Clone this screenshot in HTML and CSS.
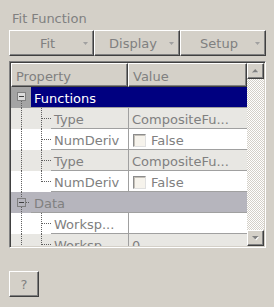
FILE: index.html
```html
<!DOCTYPE html>
<html lang="en">
<head>
  <meta charset="UTF-8">
  <title>Fit Function</title>
  <link rel="stylesheet" href="styles.css">
</head>
<body>
  <div class="dialog">
    <div class="caption">Fit Function</div>

    <div class="toolbar">
      <button class="menu-btn" type="button"><span class="label">Fit</span><svg class="caret" width="5" height="3"><path d="M0 0H5L2.5 3Z" fill="#a0a0a0"/></svg></button>
      <button class="menu-btn" type="button"><span class="label">Display</span><svg class="caret" width="5" height="3"><path d="M0 0H5L2.5 3Z" fill="#a0a0a0"/></svg></button>
      <button class="menu-btn" type="button"><span class="label">Setup</span><svg class="caret" width="5" height="3"><path d="M0 0H5L2.5 3Z" fill="#a0a0a0"/></svg></button>
    </div>

    <div class="browser">
      <div class="tree">
        <div class="head">
          <div class="head-cell prop-col">Property</div>
          <div class="head-cell">Value</div>
        </div>

        <!-- Functions group (selected) -->
        <div class="row group selected">
          <svg class="branch top" width="20" height="21">
            <rect x="6.5" y="5.5" width="8" height="8" fill="#dcdcdc" stroke="#808080"/>
            <path d="M8 9.5H13" stroke="#404040"/>
            <path d="M10.5 14V21" stroke="#606060" stroke-dasharray="1 1"/>
          </svg>
          <div class="group-name">Functions</div>
        </div>

        <div class="row alt">
          <svg class="branch child" width="40" height="21">
            <path d="M10.5 0V21M30.5 0V21M31 10.5H40" stroke="#606060" stroke-dasharray="1 1"/>
          </svg>
          <div class="prop">Type</div>
          <div class="val">CompositeFu...</div>
        </div>

        <div class="row">
          <svg class="branch child" width="40" height="21">
            <path d="M10.5 0V21M30.5 0V21M31 10.5H40" stroke="#606060" stroke-dasharray="1 1"/>
          </svg>
          <div class="prop">NumDeriv</div>
          <div class="val"><span class="check"></span>False</div>
        </div>

        <div class="row alt">
          <svg class="branch child" width="40" height="21">
            <path d="M10.5 0V21M30.5 0V21M31 10.5H40" stroke="#606060" stroke-dasharray="1 1"/>
          </svg>
          <div class="prop">Type</div>
          <div class="val">CompositeFu...</div>
        </div>

        <div class="row">
          <svg class="branch child" width="40" height="21">
            <path d="M10.5 0V21M30.5 0V11M31 10.5H40" stroke="#606060" stroke-dasharray="1 1"/>
          </svg>
          <div class="prop">NumDeriv</div>
          <div class="val"><span class="check"></span>False</div>
        </div>

        <!-- Data group -->
        <div class="row group data">
          <svg class="branch" width="20" height="21">
            <path d="M10.5 0V6M10.5 15V21M15 10.5H19" stroke="#606060" stroke-dasharray="1 1"/>
            <rect x="6.5" y="6.5" width="8" height="8" fill="none" stroke="#808080"/>
            <path d="M8 10.5H13" stroke="#404040"/>
          </svg>
          <div class="group-name">Data</div>
        </div>

        <div class="row">
          <svg class="branch child" width="40" height="21">
            <path d="M10.5 0V21M30.5 0V21M31 10.5H40" stroke="#606060" stroke-dasharray="1 1"/>
          </svg>
          <div class="prop">Worksp...</div>
          <div class="val"></div>
        </div>

        <div class="row alt">
          <svg class="branch child" width="40" height="21">
            <path d="M10.5 0V21M30.5 0V21M31 10.5H40" stroke="#606060" stroke-dasharray="1 1"/>
          </svg>
          <div class="prop">Worksp</div>
          <div class="val">0</div>
        </div>
      </div>

      <div class="scrollbar">
        <div class="sb-btn">
          <svg width="7" height="5"><path d="M1 4H7L4 1Z" fill="#fff"/><path d="M0 3.5H6.5L3.25 0Z" fill="#808080"/></svg>
        </div>
        <div class="sb-track"></div>
        <div class="sb-btn">
          <svg width="7" height="5"><path d="M1 1H7L4 4.5Z" fill="#fff"/><path d="M0 0H6.5L3.25 3.5Z" fill="#808080"/></svg>
        </div>
      </div>
    </div>

    <button class="help-btn" type="button">?</button>
  </div>
</body>
</html>
```

FILE: styles.css
```css
* {
  box-sizing: border-box;
}

body {
  margin: 0;
  background-color: #d4d0c8;
  font-family: "DejaVu Sans", sans-serif;
  font-size: 13px;
  color: #808080;
}

.dialog {
  padding: 11px 8px 0 9px;
}

.caption {
  height: 15px;
  line-height: 15px;
  padding-left: 3px;
}

/* dropdown buttons */
.toolbar {
  display: grid;
  grid-template-columns: 85px 86px 86px;
  margin-top: 4px;
}

.menu-btn,
.help-btn,
.head-cell,
.sb-btn {
  background-color: #d4d0c8;
  border: 1px solid;
  border-color: #ffffff #404040 #404040 #ffffff;
  box-shadow: inset -1px -1px #808080;
}

.menu-btn {
  display: flex;
  align-items: center;
  height: 26px;
  margin: 0;
  padding: 1px 5px 0 2px;
  font: inherit;
  color: #808080;
}

.menu-btn .label {
  flex: 1;
  text-align: center;
  line-height: 15px;
}

.caret {
  display: block;
}

/* property browser */
.browser {
  display: flex;
  height: 187px;
  margin-top: 5px;
  border: 1px solid;
  border-color: #808080 #ffffff #ffffff #808080;
  box-shadow: inset 1px 1px #404040, inset -1px -1px #d4d0c8;
  padding: 1px;
}

.tree {
  flex: 1;
  overflow: hidden;
  background-color: #ffffff;
}

.head {
  display: flex;
  height: 24px;
}

.head-cell {
  flex: 1;
  padding: 5px 0 0 4px;
  line-height: 15px;
}

.head-cell.prop-col {
  flex: 0 0 117px;
}

.row {
  display: flex;
  height: 21px;
  line-height: 15px;
}

.row.alt {
  background-color: #e8e7e3;
}

.branch {
  display: block;
  flex: none;
  shape-rendering: crispEdges;
}

.prop,
.val,
.group-name {
  height: 21px;
  padding: 4px 0 0 3px;
  border-bottom: 1px solid #a0a0a0;
  white-space: nowrap;
  overflow: hidden;
}

.prop {
  flex: 0 0 77px;
}

.val {
  flex: 1;
  display: flex;
  align-items: flex-start;
  border-left: 1px solid #a0a0a0;
}

.group-name {
  flex: 1;
}

.group.selected .branch {
  background-color: #a4a4a4;
}

.group.selected .group-name {
  background-color: #000080;
  color: #ffffff;
}

.group.data {
  background-color: #b6b5bd;
}

.check {
  width: 13px;
  height: 13px;
  margin: 1px 5px 0 1px;
  background-color: #f6f3ec;
  border: 1px solid;
  border-color: #8c8c8c #e0e0e0 #e0e0e0 #8c8c8c;
  box-shadow: inset 1px 1px #c4c0b8;
}

/* scrollbar */
.scrollbar {
  display: flex;
  flex-direction: column;
  width: 17px;
}

.sb-btn {
  display: flex;
  align-items: center;
  justify-content: center;
  height: 16px;
}

.sb-btn svg {
  display: block;
}

.sb-track {
  flex: 1;
  background: repeating-conic-gradient(#ffffff 0 25%, #d4d0c8 0 50%) 0 0 / 2px 2px;
}

.help-btn {
  display: block;
  width: 30px;
  height: 26px;
  margin: 23px 0 0 0;
  padding: 0;
  font: inherit;
  color: #808080;
}
```
